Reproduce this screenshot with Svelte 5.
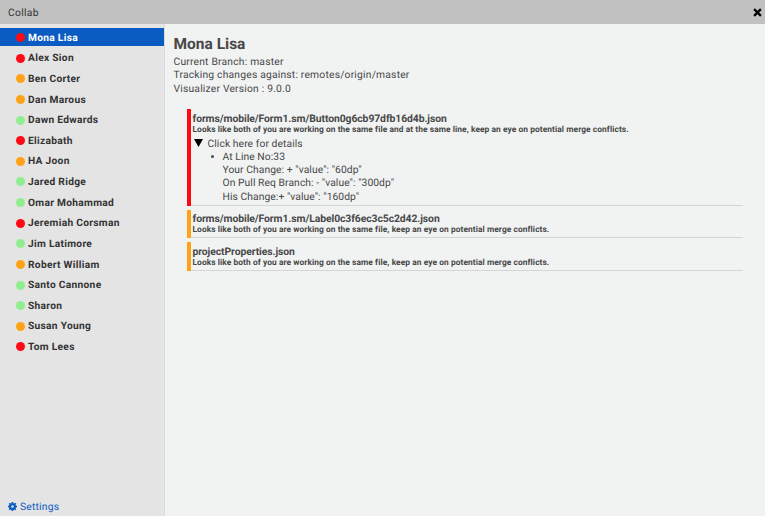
<script>
  const people = [
    ['Mona Lisa', 'red'], ['Alex Sion', 'red'], ['Ben Corter', 'orange'], ['Dan Marous', 'orange'],
    ['Dawn Edwards', 'green'], ['Elizabath', 'red'], ['HA Joon', 'orange'], ['Jared Ridge', 'green'],
    ['Omar Mohammad', 'green'], ['Jeremiah Corsman', 'red'], ['Jim Latimore', 'green'],
    ['Robert William', 'orange'], ['Santo Cannone', 'green'], ['Sharon', 'green'],
    ['Susan Young', 'orange'], ['Tom Lees', 'red']
  ];
  const sameFile = 'Looks like both of you are working on the same file, keep an eye on potential merge conflicts.';
  const files = [
    {
      name: 'forms/mobile/Form1.sm/Button0g6cb97dfb16d4b.json',
      note: 'Looks like both of you are working on the same file and at the same line, keep an eye on potential merge conflicts.',
      color: 'red',
      lines: ['At Line No:33', 'Your Change: + "value": "60dp"', 'On Pull Req Branch: - "value": "300dp"', 'His Change:+ "value": "160dp"']
    },
    { name: 'forms/mobile/Form1.sm/Label0c3f6ec3c5c2d42.json', note: sameFile, color: 'orange' },
    { name: 'projectProperties.json', note: sameFile, color: 'orange' }
  ];
  let selected = $state(0);
</script>

<div class="window">
  <header>
    <span>Collab</span>
    <svg class="close" viewBox="0 0 8 8"><path d="M1 1 7 7M7 1 1 7" /></svg>
  </header>
  <div class="body">
    <aside>
      <ul class="people">
        {#each people as [name, color], i}
          <li class:active={i === selected} onclick={() => (selected = i)} role="presentation">
            <i class="dot {color}"></i><span>{name}</span>
          </li>
        {/each}
      </ul>
      <div class="settings">
        <svg viewBox="0 0 16 16"><path fill-rule="evenodd" d="M6.7 0h2.6l.4 2.1 1.4.6 1.8-1.3 1.8 1.8-1.3 1.8.6 1.4 2 .3v2.6l-2 .4-.6 1.4 1.3 1.8-1.8 1.8-1.8-1.3-1.4.6-.4 2H6.7l-.4-2-1.4-.6-1.8 1.3-1.8-1.8 1.3-1.8-.6-1.4-2-.4V6.7l2-.3.6-1.4L1.3 3.2l1.8-1.8 1.8 1.3 1.4-.6zM8 5.6a2.4 2.4 0 1 0 0 4.8 2.4 2.4 0 0 0 0-4.8z" /></svg>
        <span>Settings</span>
      </div>
    </aside>
    <main>
      <h1>{people[selected][0]}</h1>
      <div class="meta">
        <div>Current Branch: master</div>
        <div>Tracking changes against: remotes/origin/master</div>
        <div>Visualizer Version : 9.0.0</div>
      </div>
      <div class="files">
        {#each files as f}
          <section>
            <div class="bar {f.color}"></div>
            <div class="content">
              <h2>{f.name}</h2>
              <p>{f.note}</p>
              {#if f.lines}
                <div class="summary"><svg viewBox="0 0 9 8"><path d="M0 0h9L4.500 8z" /></svg>Click here for details</div>
                <div class="details">
                  <i></i>
                  <div>{#each f.lines as line}<div>{line}</div>{/each}</div>
                </div>
              {/if}
            </div>
          </section>
        {/each}
      </div>
    </main>
  </div>
</div>

<style>
  .window { width: 765px; height: 516px; display: flex; flex-direction: column; overflow: hidden; font-family: Roboto, sans-serif; font-size: 10.3px; letter-spacing: 0.2px; text-rendering: geometricPrecision; color: #484848; background: #f1f3f3; white-space: nowrap; }
  header { height: 24px; flex: none; box-sizing: border-box; background: #c1c1c1; color: #333; display: flex; align-items: center; justify-content: space-between; padding: 0 3.5px 0 8px; letter-spacing: 0.3px; }
  .close { width: 9px; height: 9px; stroke: #000; stroke-width: 2; fill: none; }
  .body { flex: 1; display: flex; min-height: 0; }
  aside { width: 165px; box-sizing: border-box; border-right: 1px solid #d9dada; background: #e4e4e4; display: flex; flex-direction: column; justify-content: space-between; padding-top: 4px; }
  ul { list-style: none; margin: 0; padding: 0; }
  li { height: 18px; margin: 0 0 2.63px; width: 163.5px; box-sizing: border-box; padding: 1px 0 0 16px; display: flex; align-items: center; gap: 3px; font-size: 10.2px; font-weight: 700; color: #333; letter-spacing: 0.3px; }
  li span { padding-top: 1.4px; }
  li.active { background: #0b5cc2; color: #fff; }
  .dot { width: 9px; height: 9px; border-radius: 50%; }
  .red { background: #ff0a14; }
  .orange { background: #ffa216; }
  .green { background: #90ee90; }
  .settings { display: flex; align-items: center; gap: 3px; height: 20px; padding-left: 8px; color: #0b5cc2; }
  .settings svg { width: 9px; height: 9px; fill: currentColor; }
  main { flex: 1; padding: 11px 22px 0 8.5px; }
  h1 { margin: 0; font-size: 15.5px; line-height: 18px; font-weight: 700; letter-spacing: 0; }
  .meta { line-height: 13.2px; margin-top: 2.2px; }
  .files { margin: 14.2px 0 0 13px; display: flex; flex-direction: column; gap: 4px; }
  section { display: flex; }
  .bar { width: 4px; flex: none; }
  .content { flex: 1; padding: 2.6px 0 0 2px; border-bottom: 1px solid #d4d6d6; }
  h2 { margin: 0; font-size: 10.4px; line-height: 14px; font-weight: 700; letter-spacing: -0.09px; }
  p { margin: 0; font-size: 8.4px; line-height: 8.2px; padding-bottom: 2.6px; font-weight: 700; letter-spacing: 0.07px; }
  .summary { display: flex; align-items: center; gap: 5px; line-height: 13.2px; padding: 0.4px 0 0 1px; letter-spacing: 0.08px; }
  .summary svg { width: 9px; height: 8px; fill: #000; }
  .details { display: flex; line-height: 13.2px; padding: 0 0 2px 18px; letter-spacing: 0.07px; }
  .details > i { width: 3px; height: 3px; border-radius: 50%; background: #4c4c4c; margin: 5.5px 9px 0 0; }
</style>
